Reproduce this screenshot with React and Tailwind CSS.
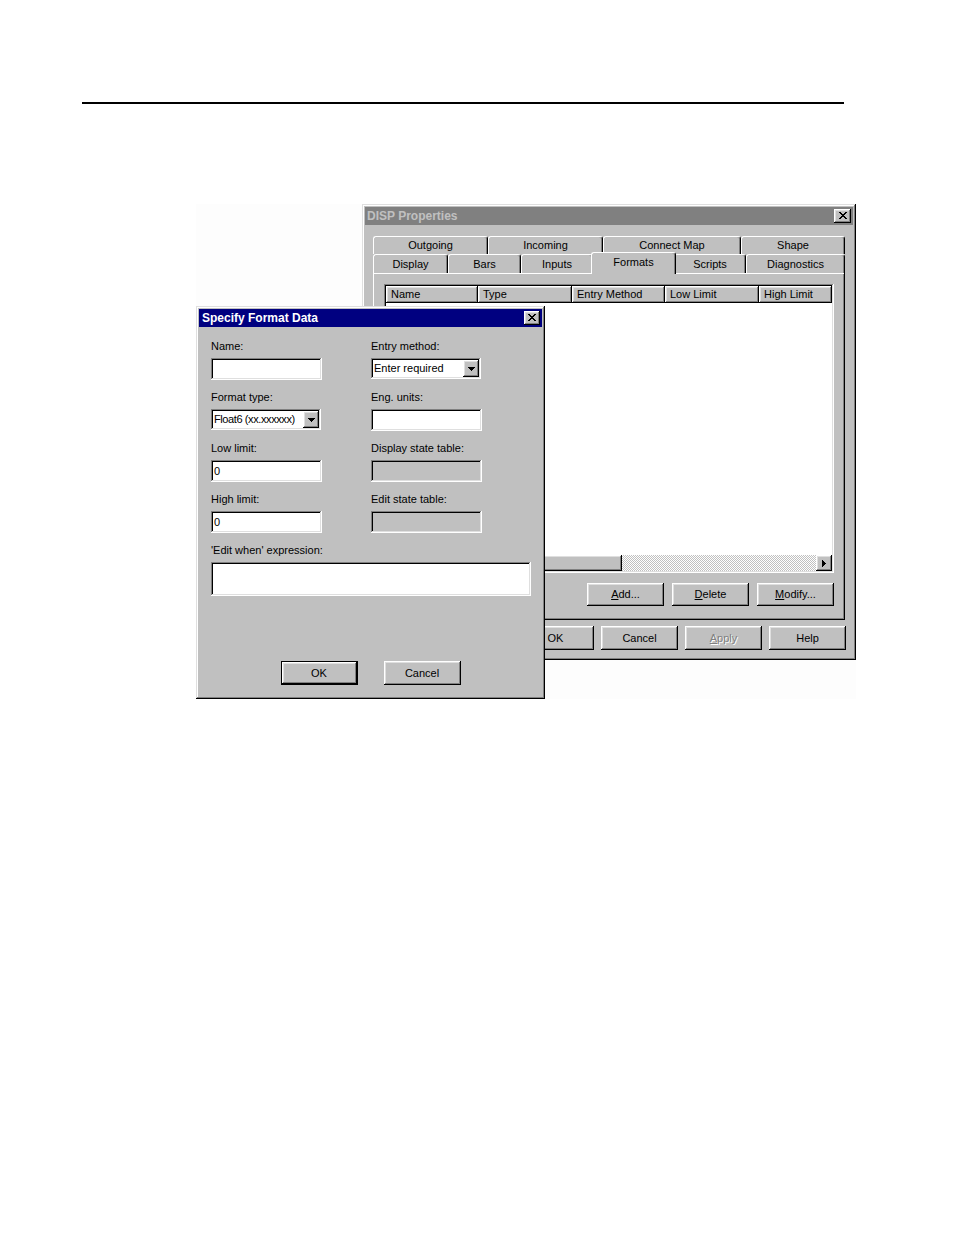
import React from "react";

const RAISED =
  "shadow-[inset_-1px_-1px_#000,inset_1px_1px_#fff,inset_-2px_-2px_#808080,inset_2px_2px_#dfdfdf]";
const SUNKEN =
  "shadow-[inset_-1px_-1px_#fff,inset_1px_1px_#808080,inset_-2px_-2px_#dfdfdf,inset_2px_2px_#000]";
const FRAME =
  "shadow-[inset_-1px_-1px_#000,inset_1px_1px_#dfdfdf,inset_-2px_-2px_#808080,inset_2px_2px_#fff]";

const X_PIXELS = [
  [0, 0], [1, 0], [6, 0], [7, 0],
  [1, 1], [2, 1], [5, 1], [6, 1],
  [2, 2], [3, 2], [4, 2], [5, 2],
  [3, 3], [4, 3],
  [2, 4], [3, 4], [4, 4], [5, 4],
  [1, 5], [2, 5], [5, 5], [6, 5],
  [0, 6], [1, 6], [6, 6], [7, 6],
];

function CloseBtn({ className }) {
  return (
    <div className={`${className} bg-[#c0c0c0] ${RAISED} flex items-center justify-center pb-[1px]`}>
      <svg width="8" height="7" viewBox="0 0 8 7" shapeRendering="crispEdges">
        {X_PIXELS.map(([x, y], i) => (
          <rect key={i} x={x} y={y} width="1" height="1" fill="#000" />
        ))}
      </svg>
    </div>
  );
}

function DownArrow() {
  return (
    <svg width="7" height="4" viewBox="0 0 7 4" shapeRendering="crispEdges">
      <rect x="0" y="0" width="7" height="1" fill="#000" />
      <rect x="1" y="1" width="5" height="1" fill="#000" />
      <rect x="2" y="2" width="3" height="1" fill="#000" />
      <rect x="3" y="3" width="1" height="1" fill="#000" />
    </svg>
  );
}

function RightArrow() {
  return (
    <svg width="4" height="7" viewBox="0 0 4 7" shapeRendering="crispEdges">
      <rect x="0" y="0" width="1" height="7" fill="#000" />
      <rect x="1" y="1" width="1" height="5" fill="#000" />
      <rect x="2" y="2" width="1" height="3" fill="#000" />
      <rect x="3" y="3" width="1" height="1" fill="#000" />
    </svg>
  );
}

function Btn({ children, className, disabled, def }) {
  const inner = (
    <div
      className={`h-full w-full bg-[#c0c0c0] ${RAISED} flex items-center justify-center text-[11px] ${
        disabled ? "text-[#808080] [text-shadow:1px_1px_0_#fff]" : "text-black"
      }`}
    >
      {children}
    </div>
  );
  if (def) return <div className={`${className} border border-black`}>{inner}</div>;
  return <div className={className}>{inner}</div>;
}

function Tab({ label, className }) {
  return (
    <div
      className={`${className} bg-[#c0c0c0] border-t border-l border-r border-t-white border-l-white border-r-black rounded-t-[3px] shadow-[inset_-1px_0_#808080] flex justify-center text-[11px] leading-none`}
    >
      {label}
    </div>
  );
}

function TextBox({ className, value, disabled }) {
  return (
    <div
      className={`${className} ${SUNKEN} ${disabled ? "bg-[#c0c0c0]" : "bg-white"} pl-[3px] flex items-center text-[11px]`}
    >
      {value}
    </div>
  );
}

function Combo({ className, value, textClass }) {
  return (
    <div className={`${className} ${SUNKEN} bg-white p-[2px] flex`}>
      <div className={`flex-1 pl-[1px] flex items-center text-[11px] whitespace-nowrap overflow-hidden ${textClass || ""}`}>
        {value}
      </div>
      <div className={`w-[16px] h-full bg-[#c0c0c0] ${RAISED} flex items-center justify-center`}>
        <DownArrow />
      </div>
    </div>
  );
}

function Field({ label, children, className }) {
  return (
    <div className={`flex flex-col ${className || ""}`}>
      <div className="h-[16px] leading-[16px] text-[11px]">{label}</div>
      <div className="mt-[4px]">{children}</div>
    </div>
  );
}

function HeaderCell({ label, className }) {
  return (
    <div className={`${className} h-full bg-[#c0c0c0] ${RAISED} pl-[5px] flex items-center text-[11px] whitespace-nowrap overflow-hidden`}>
      {label}
    </div>
  );
}

function DispProperties() {
  return (
    <div className={`absolute left-[166px] top-0 w-[494px] h-[456px] bg-[#c0c0c0] ${FRAME} p-[3px] flex flex-col`}>
      <div className="h-[18px] bg-[#808080] pl-[2px] pr-[2px] flex items-center justify-between">
        <span className="text-[12px] font-bold text-[#c0c0c0]">DISP Properties</span>
        <CloseBtn className="w-[17px] h-[14px]" />
      </div>
      <div className="px-[8px] pt-[11px] flex flex-col">
        <div className="flex h-[18px]">
          <Tab label="Outgoing" className="w-[115px] h-[18px] pt-[3px]" />
          <Tab label="Incoming" className="w-[115px] h-[18px] pt-[3px]" />
          <Tab label="Connect Map" className="w-[138px] h-[18px] pt-[3px]" />
          <Tab label="Shape" className="w-[104px] h-[18px] pt-[3px]" />
        </div>
        <div className="flex h-[19px] items-start">
          <Tab label="Display" className="w-[75px] h-[19px] pt-[4px]" />
          <Tab label="Bars" className="w-[73px] h-[19px] pt-[4px]" />
          <Tab label="Inputs" className="w-[72px] h-[19px] pt-[4px]" />
          <Tab label="Formats" className="relative z-10 w-[85px] h-[22px] -mt-[2px] -mx-[2px] pt-[4px]" />
          <Tab label="Scripts" className="w-[72px] h-[19px] pt-[4px]" />
          <Tab label="Diagnostics" className="w-[99px] h-[19px] pt-[4px]" />
        </div>
        <div className="h-[347px] w-[472px] bg-[#c0c0c0] shadow-[inset_-1px_-1px_#000,inset_1px_1px_#fff,inset_-2px_-2px_#808080] pt-[11px] pl-[11px] flex flex-col">
          <div className={`w-[450px] h-[289px] ${SUNKEN} bg-white p-[2px] flex flex-col`}>
            <div className="h-[17px] flex">
              <HeaderCell label="Name" className="w-[92px]" />
              <HeaderCell label="Type" className="w-[94px]" />
              <HeaderCell label="Entry Method" className="w-[93px]" />
              <HeaderCell label="Low Limit" className="w-[94px]" />
              <HeaderCell label="High Limit" className="flex-1" />
            </div>
            <div className="flex-1" />
            <div className="h-[16px] flex">
              <div className={`w-[16px] h-full bg-[#c0c0c0] ${RAISED}`} />
              <div className={`w-[220px] h-full bg-[#c0c0c0] ${RAISED}`} />
              <div className="flex-1 h-full bg-[repeating-conic-gradient(#c0c0c0_0%_25%,#ffffff_0%_50%)] bg-[length:2px_2px]" />
              <div className={`w-[16px] h-full bg-[#c0c0c0] ${RAISED} flex items-center justify-center`}>
                <RightArrow />
              </div>
            </div>
          </div>
          <div className="mt-[10px] flex justify-end gap-[8px] pr-[11px]">
            <Btn className="w-[77px] h-[23px]">
              <span><u>A</u>dd...</span>
            </Btn>
            <Btn className="w-[77px] h-[23px]">
              <span><u>D</u>elete</span>
            </Btn>
            <Btn className="w-[77px] h-[23px]">
              <span><u>M</u>odify...</span>
            </Btn>
          </div>
        </div>
        <div className="mt-[6px] flex justify-end gap-[7px] -mr-[1px]">
          <Btn className="w-[77px] h-[24px]">OK</Btn>
          <Btn className="w-[77px] h-[24px]">Cancel</Btn>
          <Btn disabled className="w-[77px] h-[24px]">
            <span><u>A</u>pply</span>
          </Btn>
          <Btn className="w-[77px] h-[24px]">Help</Btn>
        </div>
      </div>
    </div>
  );
}

function SpecifyFormatData() {
  return (
    <div className={`absolute left-0 top-[102px] w-[349px] h-[393px] bg-[#c0c0c0] ${FRAME} p-[3px] flex flex-col`}>
      <div className="h-[18px] bg-[#000080] pl-[3px] pr-[2px] flex items-center justify-between">
        <span className="text-[12px] font-bold text-white">Specify Format Data</span>
        <CloseBtn className="w-[16px] h-[14px]" />
      </div>
      <div className="pl-[12px] pt-[11px] grid grid-cols-[160px_160px] gap-y-[9px]">
        <Field label="Name:">
          <TextBox className="w-[111px] h-[22px]" />
        </Field>
        <Field label="Entry method:">
          <Combo className="w-[110px] h-[21px]" value="Enter required" />
        </Field>
        <Field label="Format type:">
          <Combo className="w-[110px] h-[21px]" value="Float6 (xx.xxxxxx)" textClass="tracking-[-0.4px]" />
        </Field>
        <Field label="Eng. units:">
          <TextBox className="w-[111px] h-[22px]" />
        </Field>
        <Field label="Low limit:">
          <TextBox className="w-[111px] h-[22px]" value="0" />
        </Field>
        <Field label="Display state table:">
          <TextBox className="w-[111px] h-[22px]" disabled />
        </Field>
        <Field label="High limit:">
          <TextBox className="w-[111px] h-[22px]" value="0" />
        </Field>
        <Field label="Edit state table:">
          <TextBox className="w-[111px] h-[22px]" disabled />
        </Field>
        <Field label="'Edit when' expression:" className="col-span-2">
          <TextBox className="w-[320px] h-[34px]" />
        </Field>
      </div>
      <div className="flex-1" />
      <div className="flex justify-center gap-[26px] pb-[11px]">
        <Btn def className="w-[77px] h-[24px]">OK</Btn>
        <Btn className="w-[77px] h-[24px]">Cancel</Btn>
      </div>
    </div>
  );
}

export default function App() {
  return (
    <div className="w-[954px] h-[1235px] bg-white text-black font-['Liberation_Sans',Arial,sans-serif] flex flex-col">
      <div className="ml-[82px] mt-[102px] w-[762px] h-[2px] bg-black" />
      <div className="relative ml-[196px] mt-[100px] w-[660px] h-[495px] bg-[#fdfdfd]">
        <DispProperties />
        <SpecifyFormatData />
      </div>
    </div>
  );
}
